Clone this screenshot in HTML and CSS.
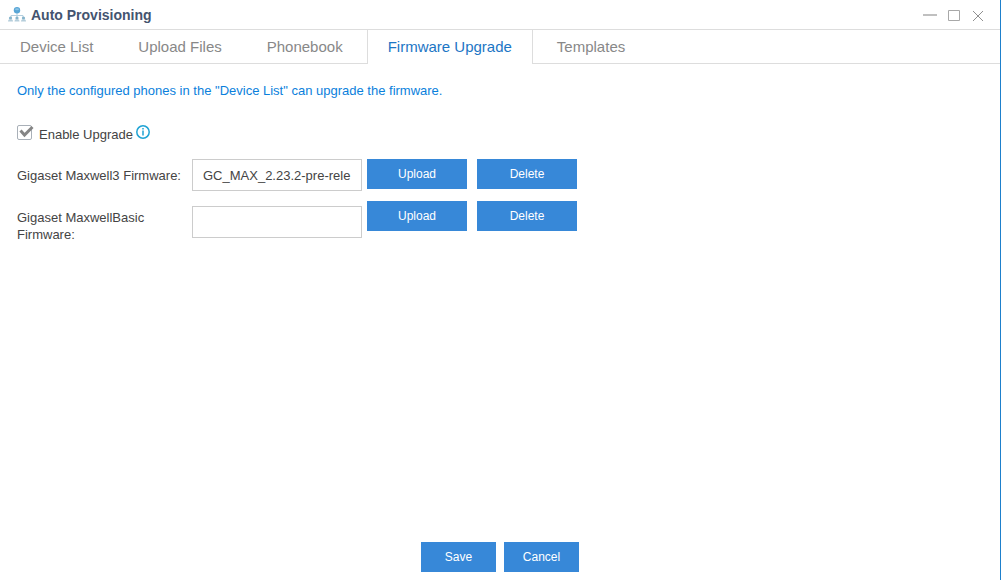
FILE: index.html
```
<!DOCTYPE html>
<html lang="en">
<head>
    <meta charset="UTF-8">
    <meta name="viewport" content="width=device-width, initial-scale=1.0">
    <title>Auto Provisioning</title>
    <link rel="stylesheet" href="styles.css">
</head>
<body>
    <div class="window">
        <header class="titlebar">
            <svg class="app-icon" width="18" height="15" viewBox="0 0 18 15" aria-hidden="true">
                <path d="M9 6v5M3 11V8.500h12V11" fill="none" stroke="#b4cfde"/>
                <circle cx="9" cy="3.300" r="3.200" fill="#58a6d6"/>
                <ellipse cx="9" cy="2.300" rx="2" ry="1" fill="#8cc4e6"/>
                <g fill="#85b4cc">
                    <circle cx="2.500" cy="11" r="1.600"/>
                    <circle cx="9" cy="11" r="1.600"/>
                    <circle cx="15.500" cy="11" r="1.600"/>
                </g>
                <g fill="#b5cedb">
                    <path d="M0 14.500q0-2.500 2.500-2.500t2.500 2.500z"/>
                    <path d="M6.500 14.500q0-2.500 2.500-2.500t2.500 2.500z"/>
                    <path d="M13 14.500q0-2.500 2.500-2.500t2.500 2.500z"/>
                </g>
            </svg>
            <h1>Auto Provisioning</h1>
            <div class="window-controls">
                <button type="button" aria-label="Minimize">
                    <svg width="14" height="14" viewBox="0 0 14 14"><path d="M0 7h14" stroke="#c0c0c0" stroke-width="2"/></svg>
                </button>
                <button type="button" aria-label="Maximize">
                    <svg width="14" height="14" viewBox="0 0 14 14"><path d="M1.500 2.500h11v10h-11z" fill="none" stroke="#a8a8a8"/></svg>
                </button>
                <button type="button" aria-label="Close">
                    <svg width="14" height="14" viewBox="0 0 14 14"><path d="M2 3l10 10M12 3L2 13" stroke="#909090"/></svg>
                </button>
            </div>
        </header>

        <nav class="tabs">
            <a href="#devices">Device List</a>
            <a href="#files">Upload Files</a>
            <a href="#phonebook">Phonebook</a>
            <a href="#firmware" class="active" aria-current="page">Firmware Upgrade</a>
            <a href="#templates">Templates</a>
        </nav>

        <form class="content">
            <p class="note">Only the configured phones in the "Device List" can upgrade the firmware.</p>

            <div class="enable-row">
                <span class="checkbox">
                    <input type="checkbox" id="enableUpgrade" checked>
                    <svg width="17" height="15" viewBox="0 0 17 15" aria-hidden="true">
                        <path d="M3.500 5.500l4 4.500L15.500 2" fill="none" stroke="#858585" stroke-width="3"/>
                    </svg>
                </span>
                <label for="enableUpgrade">Enable Upgrade</label>
                <svg class="info-icon" width="14" height="14" viewBox="0 0 14 14" role="img" aria-label="Info">
                    <circle cx="7" cy="7" r="6.200" fill="none" stroke="#1fa3d4" stroke-width="1.500"/>
                    <path d="M7 3v1.500M7 5.500v5" stroke="#1fa3d4" stroke-width="1.500"/>
                </svg>
            </div>

            <div class="firmware-row">
                <label for="maxwell3">Gigaset Maxwell3 Firmware:</label>
                <input type="text" id="maxwell3" value="GC_MAX_2.23.2-pre-rele">
                <div class="actions">
                    <button type="button" class="btn">Upload</button>
                    <button type="button" class="btn">Delete</button>
                </div>
            </div>

            <div class="firmware-row">
                <label for="maxwellBasic">Gigaset MaxwellBasic Firmware:</label>
                <input type="text" id="maxwellBasic">
                <div class="actions">
                    <button type="button" class="btn">Upload</button>
                    <button type="button" class="btn">Delete</button>
                </div>
            </div>

            <div class="footer">
                <button type="submit" class="btn">Save</button>
                <button type="button" class="btn">Cancel</button>
            </div>
        </form>
    </div>
</body>
</html>
```

FILE: styles.css
```
* {
    margin: 0;
    padding: 0;
    box-sizing: border-box;
}

body {
    font-family: "Liberation Sans", Arial, sans-serif;
    font-size: 13px;
    line-height: 17px;
    color: #444444;
    background: #ffffff;
}

.window {
    min-height: 100vh;
    display: flex;
    flex-direction: column;
    border-right: 1px solid #1e80cc;
}

/* Title bar */
.titlebar {
    display: flex;
    align-items: center;
    height: 30px;
    padding: 0 15px 0 8px;
    border-bottom: 1px solid #dddddd;
}

.titlebar h1 {
    margin-left: 5px;
    font-size: 14px;
    line-height: 18px;
    padding-top: 1px;
    color: #44546f;
}

.window-controls {
    display: flex;
    gap: 10px;
    margin-left: auto;
}

.window-controls button {
    display: flex;
    background: none;
    border: none;
    cursor: pointer;
}

/* Tabs */
.tabs {
    display: flex;
    gap: 3px;
    height: 34px;
    border-bottom: 1px solid #dddddd;
}

.tabs a {
    height: 34px;
    padding: 0 20px;
    border: 1px solid transparent;
    border-width: 0 1px;
    font-size: 15px;
    line-height: 34px;
    color: #888888;
    text-decoration: none;
}

.tabs a:first-child {
    border-left: none;
}

.tabs a.active {
    background: #ffffff;
    border-color: #dddddd;
    color: #1c76c5;
}

/* Form */
.content {
    flex: 1;
    display: flex;
    flex-direction: column;
    gap: 10px;
    padding: 18px 17px 8px;
}

.note {
    color: #0b7fdc;
}

.enable-row {
    display: flex;
    align-items: flex-start;
    margin: 16px 0 6px;
}

.enable-row label {
    margin: 1px 3px 0 5px;
}

.checkbox {
    display: grid;
}

.checkbox input,
.checkbox svg {
    grid-area: 1 / 1;
}

.checkbox input {
    appearance: none;
    width: 15px;
    height: 15px;
    border: 1px solid #a9b0b8;
    border-radius: 2px;
}

.checkbox svg {
    pointer-events: none;
    visibility: hidden;
}

.checkbox input:checked + svg {
    visibility: visible;
}

.firmware-row {
    display: grid;
    grid-template-columns: 170px 170px auto;
    column-gap: 5px;
    align-items: center;
    justify-content: start;
}

.firmware-row label {
    align-self: start;
    padding-top: 8px;
}

.firmware-row input {
    width: 100%;
    height: 32px;
    padding: 0 10px;
    border: 1px solid #cccccc;
    font: inherit;
    color: #444444;
}

.actions {
    display: flex;
    gap: 10px;
    align-self: start;
}

.btn {
    width: 100px;
    height: 30px;
    background: #3788d8;
    border: none;
    font-family: inherit;
    font-size: 12px;
    color: #ffffff;
    cursor: pointer;
}

.footer {
    display: flex;
    justify-content: center;
    gap: 8px;
    margin-top: auto;
}

.footer .btn {
    width: 75px;
}
```
